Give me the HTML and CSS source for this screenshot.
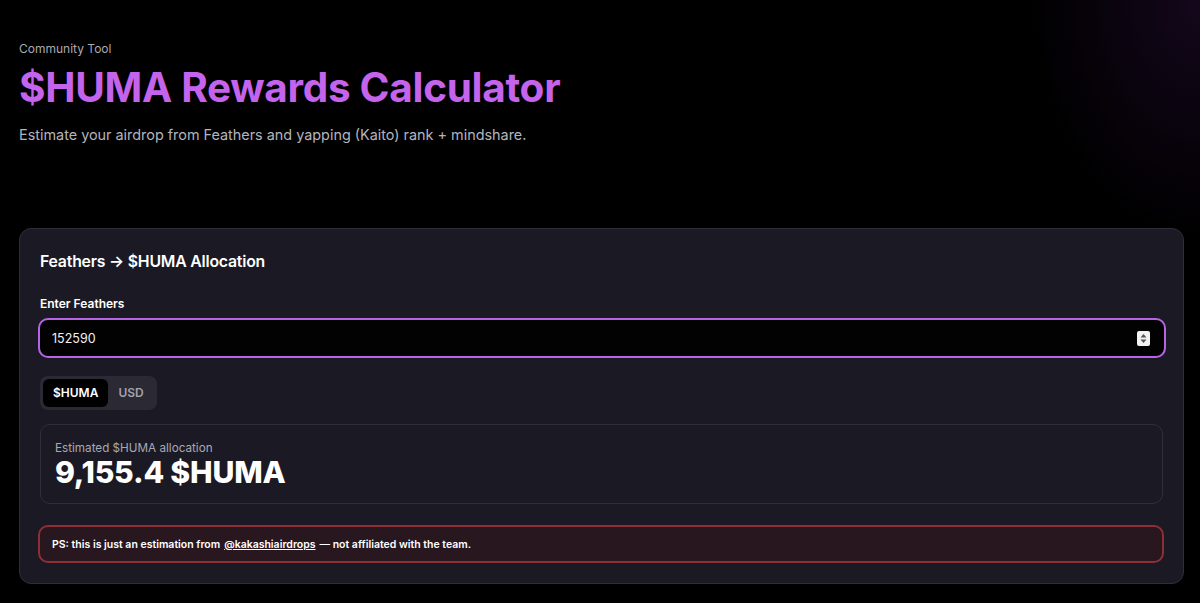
FILE: index.html
```html
<!DOCTYPE html>
<html lang="en">
<head>
    <meta charset="UTF-8">
    <title>$HUMA Rewards Calculator</title>
    <link rel="stylesheet" href="styles.css">
</head>
<body>

<div class="page">
    <header class="hero">
        <p class="eyebrow">Community Tool</p>
        <h1 class="title">$HUMA Rewards Calculator</h1>
        <p class="subtitle">Estimate your airdrop from Feathers and yapping (Kaito) rank + mindshare.</p>
    </header>

    <section class="card">
        <h2 class="cardTitle">Feathers &rarr; $HUMA Allocation</h2>

        <label class="label" for="feathers">Enter Feathers</label>
        <div class="inputWrap">
            <input id="feathers" class="input" type="text" value="152590">
            <span class="spinner">
                <svg width="11" height="13" viewBox="0 0 11 13"><path d="M5.5 2 L8.5 5.5 H2.5 Z M5.5 11 L8.5 7.5 H2.5 Z" fill="#555"/></svg>
            </span>
        </div>

        <div class="toggle">
            <span class="toggleBtn active">$HUMA</span>
            <span class="toggleBtn">USD</span>
        </div>

        <div class="result">
            <p class="resultLabel">Estimated $HUMA allocation</p>
            <p class="resultValue">9,155.4 $HUMA</p>
        </div>

        <div class="note">
            PS: this is just an estimation from <a href="#">@kakashiairdrops</a> &mdash; not affiliated with the team.
        </div>
    </section>
</div>

</body>
</html>
```

FILE: styles.css
```css
* {
    padding: 0;
    margin: 0;
    box-sizing: border-box;
}
html, body {
    height: 100%;
}
body {
    background: #000;
    background-image: radial-gradient(ellipse 170px 240px at 100% 0%, rgba(50, 18, 70, 0.4), rgba(0, 0, 0, 0) 100%);
    color: #fff;
    font-family: Inter, "Noto Sans", sans-serif;
    overflow: hidden;
}
.page {
    padding: 0 16px 0 19px;
}
.hero {
    padding-top: 42px;
    height: 228px;
}
.eyebrow {
    font-size: 12px;
    color: #a9a9b2;
    line-height: 14px;
}
.title {
    margin-top: 8px;
    font-size: 40.5px;
    font-weight: 700;
    color: #c463ec;
    line-height: 48px;
    letter-spacing: -0.3px;
}
.subtitle {
    margin-top: 13px;
    font-size: 14.4px;
    color: #b4b4bd;
    line-height: 20px;
}
.card {
    width: 1165px;
    background: #1b1a24;
    border: 1px solid #2e2d39;
    border-radius: 12px;
    padding: 23px 20px 20px 20px;
    display: flex;
    flex-direction: column;
}
.cardTitle {
    font-size: 15.8px;
    font-weight: 600;
    line-height: 20px;
    letter-spacing: -0.2px;
}
.label {
    margin-top: 24px;
    font-size: 12px;
    font-weight: 600;
    line-height: 16px;
}
.inputWrap {
    margin-top: 6px;
    margin-left: -2px;
    width: 1128px;
    height: 40px;
    background: #020203;
    border: 2px solid #b765e6;
    border-radius: 10px;
    display: flex;
    align-items: center;
    padding: 0 14px 0 12px;
}
.input {
    flex: 1;
    background: transparent;
    border: none;
    outline: none;
    color: #f2f2f2;
    font-family: Inter, "Noto Sans", sans-serif;
    font-size: 12.5px;
}
.spinner {
    width: 13px;
    height: 15px;
    background: #f2f2f2;
    border-radius: 2px;
    display: flex;
    align-items: center;
    justify-content: center;
}
.toggle {
    margin-top: 18px;
    align-self: flex-start;
    display: flex;
    padding: 3px;
    background: #2a2934;
    border-radius: 8px;
}
.toggleBtn {
    font-size: 12px;
    font-weight: 600;
    color: #a3a3ad;
    padding: 0 10px;
    height: 28px;
    line-height: 28px;
    border-radius: 6px;
}
.toggleBtn.active {
    background: #000;
    color: #fff;
}
.result {
    margin-top: 14px;
    height: 80px;
    border: 1px solid #2f2e39;
    border-radius: 10px;
    padding: 16px 14px;
}
.resultLabel {
    font-size: 11.7px;
    color: #a8a8b2;
    line-height: 14px;
}
.resultValue {
    font-size: 30.2px;
    font-weight: 800;
    line-height: 34px;
    letter-spacing: -0.2px;
}
.note {
    margin-top: 21px;
    margin-left: -2px;
    width: 1126px;
    height: 38px;
    border: 2px solid #8e2f36;
    background: #28171f;
    border-radius: 10px;
    padding: 0 12px;
    display: flex;
    align-items: center;
    font-size: 10.5px;
    font-weight: 600;
}
.note a {
    color: #fff;
    margin: 0 4px;
}
```
